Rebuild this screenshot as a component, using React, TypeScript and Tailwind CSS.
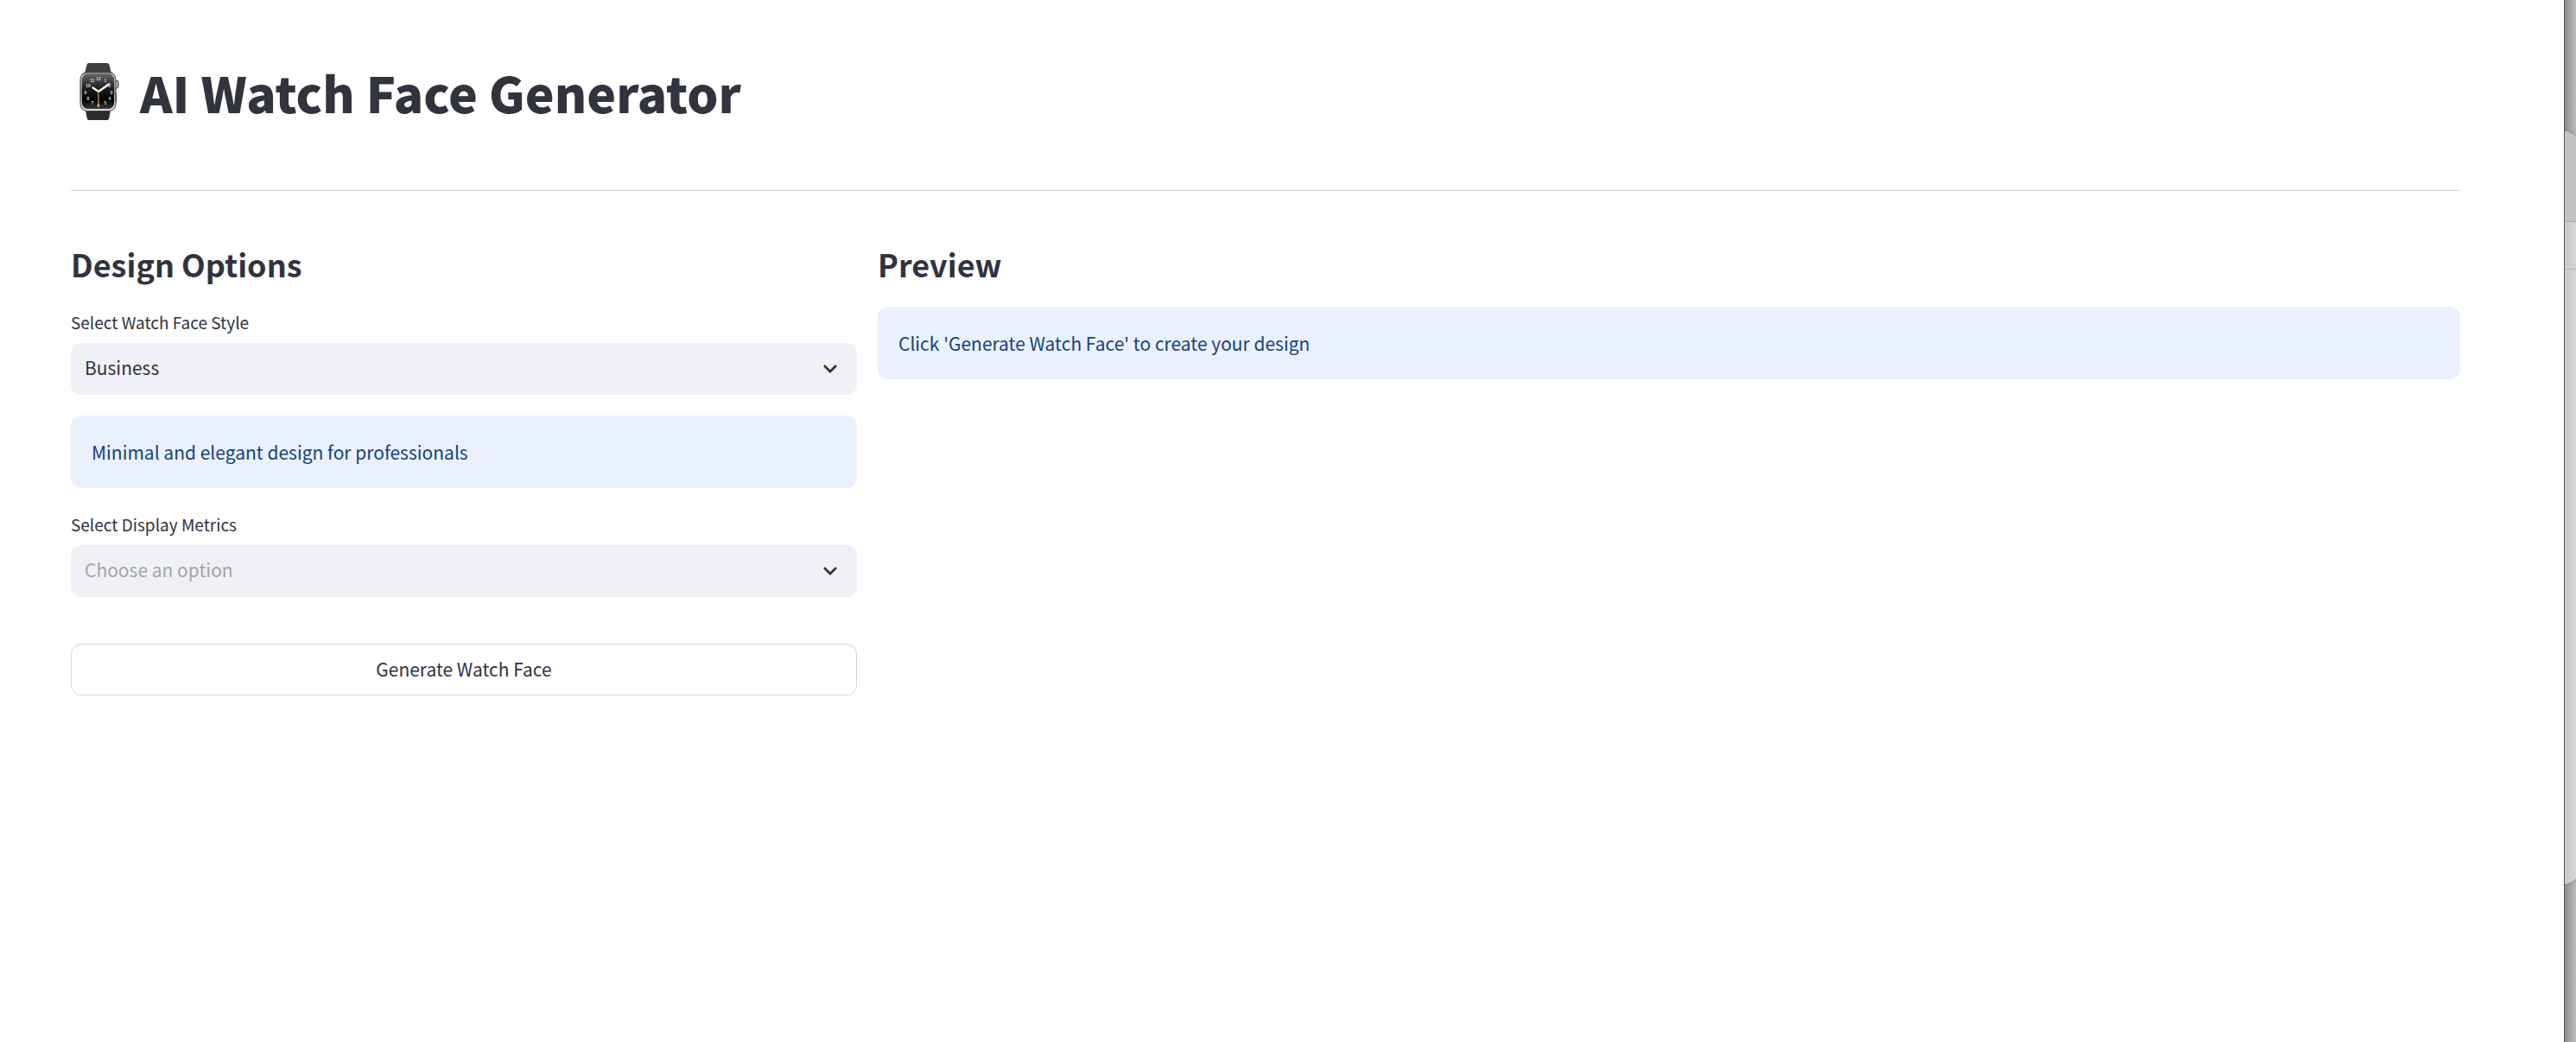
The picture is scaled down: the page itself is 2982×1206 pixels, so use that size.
import { ChangeEvent, ReactNode, useState } from "react";

const STYLES: Record<string, string> = {
  Business: "Minimal and elegant design for professionals",
  Sport: "Bold and dynamic design for active lifestyles",
  Classic: "Timeless analog design for everyday wear",
};

const METRICS = ["Heart Rate", "Steps", "Battery", "Weather"];

const NUMERALS: [string, number, number][] = [
  ["12", 22, 20],
  ["1", 30, 22],
  ["2", 35, 28],
  ["3", 37, 36],
  ["4", 35, 43],
  ["5", 30, 48],
  ["6", 22, 51],
  ["7", 15, 48],
  ["8", 10, 43],
  ["9", 7, 36],
  ["10", 10, 28],
  ["11", 15, 22],
];

function WatchIcon() {
  return (
    <svg width="46" height="66" viewBox="0 0 46 66" role="img" aria-label="Watch" className="ml-2.5 mr-6 shrink-0">
      <defs>
        <linearGradient id="case" x1="0" y1="0" x2="0" y2="1">
          <stop offset="0" stopColor="#6b6b6b" />
          <stop offset="0.08" stopColor="#c4c4c4" />
          <stop offset="0.5" stopColor="#8d8d8d" />
          <stop offset="1" stopColor="#e2e2e2" />
        </linearGradient>
        <linearGradient id="glass" x1="0" y1="0" x2="0" y2="1">
          <stop offset="0" stopColor="#666" />
          <stop offset="0.4" stopColor="#202020" />
          <stop offset="0.75" stopColor="#000" />
          <stop offset="1" stopColor="#3c3c3c" />
        </linearGradient>
      </defs>
      <path d="M11 0H32Q34 0 34.500 2L37 12H6L8.500 2Q9 0 11 0Z" fill="#3f3f3f" />
      <path d="M7 54H36L34.500 63Q34 66 32 66H11Q9 66 8.500 63Z" fill="#2b2b2b" />
      <path d="M41 20.500H43.500Q45 21 45 23V26Q45 28.500 43.500 29H41Z" fill="#c9c9c9" stroke="#3a3a3a" strokeWidth="1.200" />
      <path d="M42.500 34V45" stroke="#555" strokeWidth="1.200" />
      <rect x="1" y="10.500" width="41" height="45" rx="8" fill="url(#case)" stroke="#444" strokeWidth="1" />
      <rect x="3" y="12.500" width="37" height="40.500" rx="6.500" fill="url(#glass)" />
      <g fill="#d5d5d5" fontFamily="Liberation Sans, sans-serif" fontSize="5" fontWeight="700" textAnchor="middle">
        {NUMERALS.map(([label, x, y]) => (
          <text key={label} x={x} y={y}>
            {label}
          </text>
        ))}
      </g>
      <path d="M15.500 28.500L22 33L34 24.500" fill="none" stroke="#fff" strokeWidth="2.200" strokeLinecap="round" strokeLinejoin="round" />
      <path d="M22 32V50" stroke="#e8a02c" strokeWidth="1.200" />
      <circle cx="22" cy="49" r="1.300" fill="#e8a02c" />
    </svg>
  );
}

function Chevron() {
  return (
    <svg
      width="18"
      height="12"
      viewBox="0 0 18 12"
      aria-hidden="true"
      className="pointer-events-none absolute right-[22px] top-1/2 -translate-y-1/2"
    >
      <path d="M2 2L9 9L16 2" fill="none" stroke="#31333f" strokeWidth="2.800" />
    </svg>
  );
}

function SelectField({
  id,
  label,
  value,
  placeholder,
  options,
  onChange,
}: {
  id: string;
  label: string;
  value: string;
  placeholder?: string;
  options: string[];
  onChange: (value: string) => void;
}) {
  return (
    <div className="flex flex-col gap-3">
      <label htmlFor={id} className="text-[19px] leading-6">
        {label}
      </label>
      <div className="relative">
        <select
          id={id}
          value={value}
          onChange={(e: ChangeEvent<HTMLSelectElement>) => onChange(e.target.value)}
          className={`block h-15 w-full appearance-none rounded-xl bg-[#f0f1f6] pb-0.5 pl-4 pr-12 text-[21px] ${value ? "text-[#31333f]" : "text-[#a3a4a9]"}`}
        >
          {placeholder && <option value="">{placeholder}</option>}
          {options.map((option) => (
            <option key={option}>{option}</option>
          ))}
        </select>
        <Chevron />
      </div>
    </div>
  );
}

function Info({ children }: { children: ReactNode }) {
  return <p className="rounded-xl bg-[#eaf1fc] px-6 pb-6 pt-6 text-[21px] leading-9 text-[#174282]">{children}</p>;
}

function DesktopEdge() {
  return (
    <div
      aria-hidden="true"
      className="flex w-3.5 shrink-0 flex-col overflow-hidden border-l border-[#5a5a5a] bg-linear-to-r from-[#8e8e8e] to-[#bdbdbd] pt-38"
    >
      <div className="flex h-[871px] w-4 flex-col rounded-r-2xl bg-linear-to-r from-[#c8c8c8] to-[#dadada] shadow-[0_0_3px_#666]">
        <div className="h-[105px] rounded-tr-2xl border-b border-[#ababab] bg-[#c2c2c2]" />
        <div className="h-[55px] border-b border-[#b4b4b4]" />
      </div>
    </div>
  );
}

export default function App() {
  const [style, setStyle] = useState("Business");
  const [metric, setMetric] = useState("");

  return (
    <div className="flex min-h-screen bg-white font-['Noto_Sans_CJK_SC',sans-serif] text-[#31333f]">
      <main className="min-w-0 flex-1 pl-[82px] pr-30 pt-15">
        <h1 className="flex h-23 items-center text-[57px] font-black leading-none">
          <WatchIcon />
          AI Watch Face Generator
        </h1>
        <hr className="mt-17 border-[#d6d6d9]" />
        <div className="mt-13 flex items-start gap-6">
          <section className="flex w-[calc(33.333%-12px)] flex-col gap-6">
            <h2 className="text-[36px] font-semibold leading-16">Design Options</h2>
            <SelectField id="style" label="Select Watch Face Style" value={style} options={Object.keys(STYLES)} onChange={setStyle} />
            <Info>{STYLES[style]}</Info>
            <div className="mt-1.5">
              <SelectField
                id="metrics"
                label="Select Display Metrics"
                value={metric}
                placeholder="Choose an option"
                options={METRICS}
                onChange={setMetric}
              />
            </div>
            <button type="button" className="mt-7.5 h-15 rounded-xl border border-[#d6d6d9] text-[21px]">
              Generate Watch Face
            </button>
          </section>
          <section className="flex flex-1 flex-col gap-4.5">
            <h2 className="text-[36px] font-semibold leading-16">Preview</h2>
            <Info>Click 'Generate Watch Face' to create your design</Info>
          </section>
        </div>
      </main>
      <DesktopEdge />
    </div>
  );
}
